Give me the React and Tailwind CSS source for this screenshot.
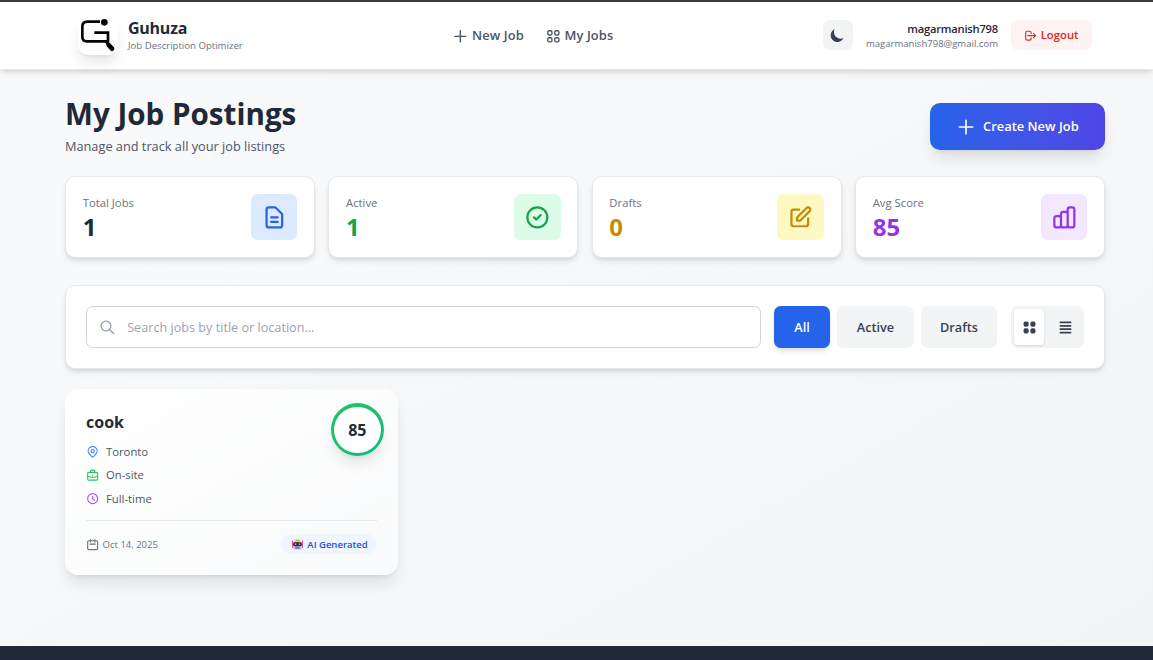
import {
  HiOutlinePlus, HiOutlineViewGrid, HiMoon, HiOutlineLogout, HiOutlineDocumentText, HiOutlineCheckCircle,
  HiOutlinePencilAlt, HiOutlineChartBar, HiOutlineSearch, HiViewGrid, HiViewList, HiOutlineLocationMarker,
  HiOutlineBriefcase, HiOutlineClock, HiOutlineCalendar,
} from "react-icons/hi";

function Logo() {
  return (
    <div className="h-10 w-10 shrink-0 rounded-[10px] bg-white shadow-lg">
      <svg viewBox="0 0 120 120" className="h-full w-full" fill="none" stroke="#050505" strokeWidth="8" strokeLinecap="round">
        <path d="M66 20H28Q13 20 13 35V66Q13 79 26 79H90V53H49" strokeLinecap="butt" />
        <path d="M84 80L92 90" strokeWidth="8" />
        <path d="M92 90L102 101" strokeWidth="14" />
        <circle cx="79" cy="22" r="10" fill="#050505" stroke="none" />
      </svg>
    </div>
  );
}

function Robot() {
  return (
    <svg viewBox="0 0 20 20" className="h-[11px] w-[11px]">
      <rect x="0" y="3" width="2" height="13" fill="#f0508c" />
      <rect x="18" y="3" width="2" height="13" fill="#f0508c" />
      <rect x="6" y="1" width="8" height="4" rx="2" fill="#f5a623" />
      <rect x="2" y="4" width="16" height="15" rx="3" fill="#d3b3d6" />
      <rect x="2" y="6" width="16" height="7" rx="3" fill="#2b2545" />
      <circle cx="6.5" cy="9.5" r="1.6" fill="#6fc3f7" />
      <circle cx="13.5" cy="9.5" r="1.6" fill="#6fc3f7" />
      <rect x="6" y="15.5" width="8" height="1.5" fill="#3b2f52" />
    </svg>
  );
}

const stats = [
  { label: "Total Jobs", value: "1", color: "text-[#1f2937]", box: "bg-[#dbeafe] text-[#2563eb]", Icon: HiOutlineDocumentText },
  { label: "Active", value: "1", color: "text-[#16a34a]", box: "bg-[#dcfce7] text-[#16a34a]", Icon: HiOutlineCheckCircle },
  { label: "Drafts", value: "0", color: "text-[#ca8a04]", box: "bg-[#fef9c3] text-[#ca8a04]", Icon: HiOutlinePencilAlt },
  { label: "Avg Score", value: "85", color: "text-[#9333ea]", box: "bg-[#f3e8ff] text-[#9333ea]", Icon: HiOutlineChartBar },
];

const details = [
  { text: "Toronto", Icon: HiOutlineLocationMarker, color: "text-[#3b82f6]" },
  { text: "On-site", Icon: HiOutlineBriefcase, color: "text-[#22c55e]" },
  { text: "Full-time", Icon: HiOutlineClock, color: "text-[#a855f7]" },
];

function Header() {
  return (
    <header className="h-[70px] border-t-2 border-b border-t-[#3b3939] border-b-[#e5e7eb] bg-white shadow-md">
      <div className="ml-[78px] flex h-[66px] w-[1014px] items-center justify-between">
        <div className="flex items-center gap-[10px]">
          <Logo />
          <div className="pt-[2px]">
            <div className="text-[16px] leading-[19px] font-bold tracking-[-0.25px] text-[#1f2937]">Guhuza</div>
            <div className="pt-px text-[9.6px] leading-[14px] text-[#6b7280]">Job Description Optimizer</div>
          </div>
        </div>
        <nav className="flex gap-[21px] pt-[2px] text-[12.9px] font-semibold tracking-[0.1px] text-[#4b5563]">
          <span className="flex items-center gap-[3px]"><HiOutlinePlus className="h-[16.7px] w-[16.7px]" />New Job</span>
          <span className="flex items-center gap-[3px]"><HiOutlineViewGrid className="h-[16.7px] w-[16.7px]" />My Jobs</span>
        </nav>
        <div className="flex items-center justify-end gap-[13px]">
          <button className="flex h-[30px] w-[30px] items-center justify-center rounded-[6.7px] bg-[#f3f4f6] pr-[2px] text-[#374151]"><HiMoon className="h-[16.7px] w-[16.7px]" /></button>
          <div className="pt-[1px] text-right">
            <div className="text-[11.2px] leading-[16px] font-semibold tracking-[-0.22px] text-[#1f2937]">magarmanish798</div>
            <div className="text-[9.55px] leading-[13px] text-[#6b7280]">magarmanish798@gmail.com</div>
          </div>
          <button className="flex h-[30px] w-[81px] items-center justify-center gap-[3px] rounded-[6.7px] bg-[#fef2f2] pt-px text-[11.3px] font-semibold text-[#dc2626]"><HiOutlineLogout className="h-[13.3px] w-[13.3px]" />Logout</button>
        </div>
      </div>
    </header>
  );
}

export default function App() {
  return (
    <div className="flex h-[660px] flex-col overflow-hidden bg-linear-to-br from-[#f9fafb] to-[#f3f4f6] font-['Open_Sans','Noto_Sans',sans-serif]">
      <Header />
      <main className="ml-[65px] w-[1040px] flex-1 pt-[26px]">
        <div className="flex items-start justify-between">
          <div>
            <h1 className="text-[29.6px] leading-[36px] font-bold text-[#1f2937]">My Job Postings</h1>
            <p className="mt-[4px] text-[12.75px] leading-[20px] text-[#4b5563]">Manage and track all your job listings</p>
          </div>
          <button className="mt-[7px] flex h-[47px] w-[175px] items-center justify-center gap-[6.7px] rounded-[10px] bg-linear-to-r from-[#2563eb] to-[#4f46e5] text-[12.9px] font-semibold text-white shadow-lg">
            <HiOutlinePlus className="h-5 w-5" />Create New Job
          </button>
        </div>
        <div className="mt-[20px] grid grid-cols-4 gap-[13.33px]">
          {stats.map(({ label, value, color, box, Icon }) => (
            <div key={label} className="flex h-[82px] items-center justify-between rounded-[10px] border border-[#e5e7eb] bg-white px-[16.7px] shadow-md">
              <div className="pt-[2px]">
                <div className="text-[11.3px] leading-[17px] text-[#6b7280]">{label}</div>
                <div className={`text-[24px] leading-[32px] font-bold ${color}`}>{value}</div>
              </div>
              <div className={`flex h-[46.7px] w-[46.7px] items-center justify-center rounded-[6.7px] ${box}`}><Icon className="h-[26.7px] w-[26.7px]" /></div>
            </div>
          ))}
        </div>
        <div className="mt-[27px] flex h-[84px] items-center rounded-[10px] border border-[#e5e7eb] bg-white px-[20px] shadow-md">
          <div className="flex h-[42px] flex-1 items-center gap-[11.5px] rounded-[6.7px] border border-[#d1d5db] px-[12px] text-[12.65px] text-[#9ca3af]">
            <HiOutlineSearch className="h-[16.7px] w-[16.7px]" /><span className="pt-[1px]">Search jobs by title or location...</span>
          </div>
          <div className="ml-[13.3px] flex gap-[7px] text-[12.7px] font-semibold">
            <button className="h-[42px] w-[56px] rounded-[6.7px] bg-[#2563eb] pt-[2px] text-white shadow-md">All</button>
            <button className="h-[42px] w-[77px] rounded-[6.7px] bg-[#f3f4f6] pt-[2px] text-[#374151]">Active</button>
            <button className="h-[42px] w-[76px] rounded-[6.7px] bg-[#f3f4f6] pt-[2px] text-[#374151]">Drafts</button>
          </div>
          <div className="ml-[14px] flex h-[42px] w-[73px] gap-[6px] rounded-[6.7px] bg-[#f3f4f6] p-[3px] text-[#374151]">
            <span className="flex w-[30px] items-center justify-center rounded-[4px] bg-white shadow-sm"><HiViewGrid className="h-[17px] w-[17px]" /></span>
            <span className="flex w-[30px] items-center justify-center"><HiViewList className="h-[17px] w-[17px]" /></span>
          </div>
        </div>
        <article className="relative mt-[20px] h-[186px] w-[333px] rounded-[13.3px] bg-linear-to-br from-white to-[#f9fafb] px-[21px] pt-[21px] shadow-lg">
          <div className="absolute top-[14px] right-[14px] h-[53.3px] w-[53.3px] rounded-full bg-linear-to-br from-[#22c55e] to-[#10b981] p-[3.5px] shadow-lg">
            <div className="flex h-full w-full items-center justify-center rounded-full bg-white pt-px text-[16px] font-bold text-[#1f2937]">85</div>
          </div>
          <h3 className="text-[16px] leading-[24px] font-bold text-[#1f2937]">cook</h3>
          <div className="mt-[6px] flex flex-col">
            {details.map(({ text, Icon, color }) => (
              <div key={text} className="flex h-[23.6px] items-center gap-[6.7px] text-[11.3px] text-[#4b5563]"><Icon className={`h-[13.3px] w-[13.3px] ${color}`} /><span className="pt-px">{text}</span></div>
            ))}
          </div>
          <div className="mt-[9px] flex items-center justify-between border-t border-[#e5e7eb] pt-[13.5px]">
            <span className="flex items-center gap-[3.3px] text-[9.5px] text-[#6b7280]"><HiOutlineCalendar className="h-[13.3px] w-[13.3px]" /><span className="pt-px">Oct 14, 2025</span></span>
            <span className="flex h-[20px] w-[96px] items-center justify-center gap-[4px] rounded-full bg-[#eff6ff] pl-[2px] text-[9.5px] font-semibold text-[#1d4ed8]"><Robot /><span className="pt-px">AI Generated</span></span>
          </div>
        </article>
      </main>
      <footer className="h-[14px] bg-[#1f2937]" />
    </div>
  );
}
